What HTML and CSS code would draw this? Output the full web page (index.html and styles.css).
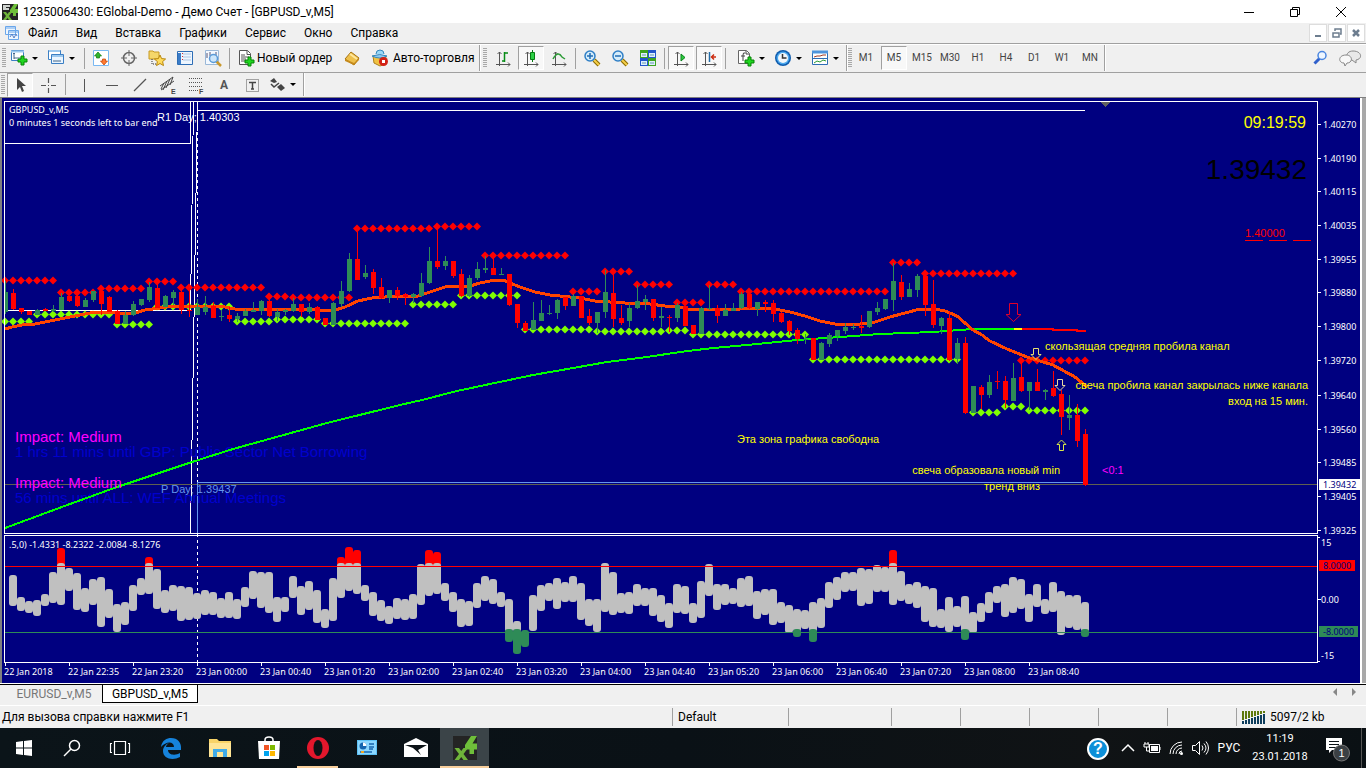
FILE: index.html
```html
<!DOCTYPE html>
<html lang="ru">
<head>
<meta charset="utf-8">
<title>1235006430: EGlobal-Demo - Демо Счет - [GBPUSD_v,M5]</title>
<link rel="stylesheet" href="styles.css">
</head>
<body>
<svg class="defs" aria-hidden="true">
  <defs>
    <g id="axes"><path d="M4.500 1v14M1 13.500h14M2.500 3l2-2 2 2M13 11.500l2 2-2 2" fill="none" stroke="#555"/></g>
    <g id="plus"><path d="M10 7h3v3h3v3h-3v3h-3v-3H7v-3h3z" fill="#1fd51f" stroke="#078307"/></g>
    <g id="lens"><path d="M10 10l5 5" stroke="#8a6a00" stroke-width="4"/><path d="M10 10l5 5" stroke="#f5cf4a" stroke-width="2"/><circle cx="6" cy="6" r="5" fill="#d5ecfa" stroke="#2f7fc6" stroke-width="1.5"/></g>
    <g id="mt"><rect width="16" height="16" fill="#242424"/><path d="M12 0h4l-3 5h3v4h-2v3h-3V9H8V6z" fill="#6fbf3a"/><path d="M1 8h3l1.500 2L7 8h3l-3 4 3 4H7l-1.500-2L4 16H1l3-4z" fill="#6fb53a"/></g>
  </defs>
</svg>
<div class="app">
  <header class="titlebar">
    <svg class="app-icon" viewBox="0 0 16 16"><use href="#mt"/><path d="M1 1h7v2H4v1h3v2H1z" fill="#cfd3cf"/></svg>
    <h1 class="title">1235006430: EGlobal-Demo - Демо Счет - [GBPUSD_v,M5]</h1>
    <button class="win-btn" aria-label="Свернуть"><svg viewBox="0 0 12 12"><path d="M1 6.500h10" stroke="#000"/></svg></button>
    <button class="win-btn" aria-label="Развернуть"><svg viewBox="0 0 12 12"><path d="M1.500 3.500h7v7h-7zM3.500 3.500v-2h7v7h-2" fill="none" stroke="#000"/></svg></button>
    <button class="win-btn" aria-label="Закрыть"><svg viewBox="0 0 12 12"><path d="M1 1l10 10M11 1L1 11" stroke="#000"/></svg></button>
  </header>

  <nav class="menubar">
    <svg class="menu-icon" viewBox="0 0 16 16"><path d="M1.500 1.500h10v8h-10zM4.500 5.500h10v9h-10z" fill="#eef6ff" stroke="#6aa6ea"/><path d="M1.500 3h10M4.500 7h10" stroke="#6aa6ea"/><path d="M6 12l2-3 2 4 2-4 1 2" fill="none" stroke="#5580c8"/></svg>
    <button class="menu">Файл</button><button class="menu">Вид</button><button class="menu">Вставка</button><button class="menu">Графики</button><button class="menu">Сервис</button><button class="menu">Окно</button><button class="menu">Справка</button>
    <span class="spacer"></span>
    <button class="mdi" aria-label="Свернуть окно"><svg viewBox="0 0 12 12"><path d="M3 9h6" stroke="#6d7d8f" stroke-width="2"/></svg></button>
    <button class="mdi" aria-label="Восстановить окно"><svg viewBox="0 0 12 12"><path d="M2 6h6v4H2zM4 4V2h6v5H9" fill="none" stroke="#6d7d8f" stroke-width="1.500"/></svg></button>
    <button class="mdi" aria-label="Закрыть окно"><svg viewBox="0 0 12 12"><path d="M3 3l6 6M9 3L3 9" stroke="#6d7d8f" stroke-width="2.500"/></svg></button>
  </nav>

  <div class="toolbar">
    <i class="grip"></i>
    <button class="tb drop" aria-label="Новый график"><svg viewBox="0 0 18 18"><path d="M1.500 1.500h12v10h-12z" fill="#fff" stroke="#3b7fc4"/><path d="M1 2.500h13" stroke="#9cc8ee" stroke-width="2"/><path d="M4 4v6M3 5l1-1 1 1M4 9h7" fill="none" stroke="#468"/><use href="#plus" x="1" y="0"/></svg></button>
    <button class="tb drop" aria-label="Профили"><svg viewBox="0 0 18 18"><path d="M1.500 1.500h12v9h-12z" fill="#fff" stroke="#3b7fc4"/><path d="M4.500 5.500h12v9h-12z" fill="#eaf5ff" stroke="#3b7fc4"/><path d="M2 2h11M5 7h11" stroke="#9cc8ee" stroke-width="2"/><path d="M6 12h8" stroke="#468"/></svg></button>
    <i class="sep"></i>
    <button class="tb" aria-label="Обзор рынка"><svg viewBox="0 0 18 18"><path d="M1.500 1.500h15v15h-15z" fill="#fff" stroke="#79b8f2"/><path d="M6 3l3.500 4H7.500v2h-3V7h-2z" fill="#2fb52f" stroke="#117a11" stroke-width=".7"/><path d="M12 16l-3.500-4h2v-2h3v2h2z" fill="#ff7a30" stroke="#c03c00" stroke-width=".7"/></svg></button>
    <button class="tb" aria-label="Окно данных"><svg viewBox="0 0 18 18"><circle cx="9" cy="9" r="5.500" fill="none" stroke="#666" stroke-width="1.500"/><path d="M9 1v6M9 11v6M1 9h6M11 9h6" stroke="#666"/></svg></button>
    <button class="tb" aria-label="Навигатор"><svg viewBox="0 0 18 18"><path d="M1 2h4l1 1h5v7H1z" fill="#f5d76a" stroke="#c79a22"/><path d="M4 10v5h5" fill="none" stroke="#333" stroke-dasharray="1 1"/><path d="M12 6l1.600 3.600 4 .4-3 2.600.9 4L12 14.500 8.500 16.600l.9-4-3-2.600 4-.4z" fill="#ffdb5c" stroke="#b8860b"/></svg></button>
    <button class="tb" aria-label="Терминал"><svg viewBox="0 0 18 18"><path d="M1.500 2.500h15v13h-15z" fill="#eef6ff" stroke="#2d6db5"/><path d="M2 4h3v11H2z" fill="#3a7cc8"/><path d="M7 5h8M7 8h8M7 11h8" stroke="#aac6e4"/><path d="M6.500 4v8" stroke="#c33" stroke-dasharray="1 2"/></svg></button>
    <button class="tb" aria-label="Тестер стратегий"><svg viewBox="0 0 18 18"><path d="M1.500 1.500h13v14h-13z" fill="#f4f9ff" stroke="#9ab8d8"/><path d="M3 9V4M6 7V3M12 6V3" stroke="#557"/><path d="M12 12l5 5" stroke="#c9982d" stroke-width="2.500"/><circle cx="9.500" cy="9.500" r="4" fill="#cde6fa" stroke="#5b9bd8" stroke-width="1.500"/></svg></button>
    <i class="sep"></i>
    <button class="tb wide order"><svg viewBox="0 0 18 18"><path d="M2.500 1.500h8l3 3v11h-11z" fill="#fff" stroke="#555"/><path d="M10 1.500v4h4M4 6h4M4 8h8M4 10h5M4 12h4" fill="none" stroke="#555"/><use href="#plus" x="1" y="1"/></svg>Новый ордер</button>
    <button class="tb" aria-label="MetaEditor"><svg viewBox="0 0 18 18"><path d="M2 10l6-7 8 6-5 7z" fill="#eec04c" stroke="#a87412"/><path d="M2 10l9 4 5-5v2l-5 5-9-4z" fill="#c58a1c"/><path d="M7 5l7 5" stroke="#ffe79c" stroke-width="2"/></svg></button>
    <button class="tb wide auto"><svg viewBox="0 0 18 18"><path d="M2 7h13l-1 8-5 2-6-3z" fill="#f0c243" stroke="#ae801a"/><path d="M1 7q8-3 15 0-7 4-15 0" fill="#8cc9ef" stroke="#3587bd"/><path d="M5 5q0-4 4-4t4 4" fill="#9bd7f5" stroke="#3587bd"/><circle cx="12.500" cy="12.500" r="4.500" fill="#d32216"/><path d="M11 11h3v3h-3z" fill="#fff"/></svg>Авто-торговля</button>
    <i class="edge"></i><i class="grip"></i>
    <button class="tb" aria-label="Бары"><svg viewBox="0 0 18 18"><use href="#axes" x="1" y="2"/><path d="M10.500 3v10M8 12h2M11 4h3" stroke="#078b16" stroke-width="1.500"/></svg></button>
    <button class="tb pressed" aria-label="Японские свечи"><svg viewBox="0 0 18 18"><use href="#axes" x="1" y="2"/><path d="M10.500 1v12" stroke="#077b12"/><path d="M8.500 3.500h4v7h-4z" fill="#2bd044" stroke="#077b12"/></svg></button>
    <button class="tb" aria-label="Линия"><svg viewBox="0 0 18 18"><use href="#axes" x="1" y="2"/><path d="M3 10q5-9 9-2l3 2" fill="none" stroke="#2b9b35" stroke-width="1.500"/></svg></button>
    <i class="sep"></i>
    <button class="tb" aria-label="Увеличить"><svg viewBox="0 0 18 18"><use href="#lens" x="1" y="1"/><path d="M4 7h6M7 4v6" stroke="#226eb5" stroke-width="1.500"/></svg></button>
    <button class="tb" aria-label="Уменьшить"><svg viewBox="0 0 18 18"><use href="#lens" x="1" y="1"/><path d="M4 7h6" stroke="#226eb5" stroke-width="1.500"/></svg></button>
    <button class="tb" aria-label="Окна мозаикой"><svg viewBox="0 0 18 18"><path d="M1 1h8v8H1zM9 9h8v8H9z" fill="#3da420"/><path d="M9 1h8v8H9zM1 9h8v8H1z" fill="#2356cc"/><path d="M2 4h6v4H2zM10 4h6v4h-6zM2 12h6v4H2zM10 12h6v4h-6z" fill="#dff0ff"/><path d="M3 6h4M11 6h4M3 14h4M11 14h4" stroke="#69a"/></svg></button>
    <i class="sep"></i>
    <button class="tb pressed" aria-label="Автопрокрутка"><svg viewBox="0 0 18 18"><use href="#axes" x="1" y="2"/><path d="M9 5l4 3.500L9 12z" fill="#2fcb40" stroke="#078118"/></svg></button>
    <button class="tb pressed" aria-label="Сдвиг графика"><svg viewBox="0 0 18 18"><use href="#axes" x="1" y="2"/><path d="M9.500 3v10" stroke="#246da8" stroke-width="1.500"/><path d="M11 8h5M14 5.500L11.500 8l2.500 2.500" fill="none" stroke="#cb2d12" stroke-width="1.500"/></svg></button>
    <i class="sep apart"></i>
    <button class="tb drop" aria-label="Индикаторы"><svg viewBox="0 0 18 18"><path d="M1.500 1.500h8l3 3v10h-11z" fill="#fff" stroke="#666"/><path d="M9 2v3h3M8 4q-2-1-2 2v6M4 7h4" fill="none" stroke="#444"/><use href="#plus" x="1" y="1"/></svg></button>
    <button class="tb drop" aria-label="Периоды"><svg viewBox="0 0 18 18"><circle cx="9" cy="9" r="8" fill="#0e5cae"/><circle cx="9" cy="9" r="6.500" fill="#4ba8ee"/><circle cx="9" cy="9" r="5" fill="#f2f7fb"/><path d="M8.500 5v4h4" fill="none" stroke="#333" stroke-width="1.500"/></svg></button>
    <button class="tb drop" aria-label="Шаблоны"><svg viewBox="0 0 18 18"><path d="M1.500 2.500h15v13h-15zM1.500 9.500h15" fill="#fff" stroke="#2d6db5"/><path d="M1 3h16" stroke="#4e94dc" stroke-width="3"/><path d="M3 8l3-1h3l3-1h3" fill="none" stroke="#a23b24"/><path d="M3 14l3-2 3 1 3-2 3 1" fill="none" stroke="#2b9b35"/></svg></button>
    <i class="edge"></i><i class="grip tight"></i>
    <button class="tb tf">M1</button><button class="tb tf pressed">M5</button><button class="tb tf">M15</button><button class="tb tf">M30</button><button class="tb tf">H1</button><button class="tb tf">H4</button><button class="tb tf">D1</button><button class="tb tf">W1</button><button class="tb tf">MN</button>
    <i class="edge"></i>
    <span class="spacer"></span>
    <button class="tb" aria-label="Поиск"><svg viewBox="0 0 18 18"><path d="M9 9l-5.500 5.500" stroke="#2f60cc" stroke-width="3"/><circle cx="11" cy="6.500" r="4" fill="#eef6ff" stroke="#4a86e0" stroke-width="1.500"/></svg></button>
    <button class="tb chat" aria-label="Чат"><svg viewBox="0 0 24 18"><path d="M15 2c-8 0-8 9-1 9l4 3v-3c7-1 6-9-3-9z" fill="#e8e8e8" stroke="#888"/><path d="M8 6c-8 0-8 8-2 8l1 3 2-3c6 0 6-8-1-8z" fill="#f8f8f8" stroke="#888"/></svg></button>
  </div>

  <div class="toolbar draw">
    <i class="grip"></i>
    <button class="tb pressed" aria-label="Курсор"><svg viewBox="0 0 18 18"><path d="M6 2v12l3-3 2 5 2-1-2-5h4z" fill="#444"/></svg></button>
    <button class="tb" aria-label="Перекрестие"><svg viewBox="0 0 18 18"><path d="M9.500 2v5M9.500 12v5M2 9.500h5M12 9.500h5M9 9.500h1" stroke="#555" stroke-width="1.200"/></svg></button>
    <i class="sep"></i>
    <button class="tb" aria-label="Вертикальная линия"><svg viewBox="0 0 18 18"><path d="M9.500 3v13" stroke="#555"/></svg></button>
    <button class="tb" aria-label="Горизонтальная линия"><svg viewBox="0 0 18 18"><path d="M3 9.500h12" stroke="#555"/></svg></button>
    <button class="tb" aria-label="Трендовая линия"><svg viewBox="0 0 18 18"><path d="M3 15L15 3" stroke="#555" stroke-width="1.200"/></svg></button>
    <button class="tb" aria-label="Равноудаленный канал"><svg viewBox="0 0 18 18"><path d="M1 10L14 1M2 14L15 5M4 14l4-9M7 12l4-9M11 9l3-8M2 13l3-6" stroke="#444"/><text x="12" y="18" class="glyph">E</text></svg></button>
    <button class="tb" aria-label="Линии Фибоначчи"><svg viewBox="0 0 18 18"><path d="M2 2.500h14M2 6.500h14M2 10.500h14M2 14.500h9" stroke="#555" stroke-dasharray="1 1"/><text x="12" y="18" class="glyph">F</text></svg></button>
    <button class="tb letter">A</button>
    <button class="tb" aria-label="Текстовая метка"><svg viewBox="0 0 18 18"><path d="M3.500 3.500h12v12h-12z" fill="none" stroke="#555" stroke-dasharray="1 1"/><path d="M6 6.500h7M9.500 6v7M8 13h3" stroke="#444" stroke-width="1.500"/></svg></button>
    <button class="tb drop" aria-label="Стрелки"><svg viewBox="0 0 18 18"><path d="M2 5l4-3 3 4-3 1zM9 11l4-3 4 4-4 3z" fill="#444"/><path d="M3 8l3 3 5-4" fill="none" stroke="#444" stroke-width="1.500"/></svg></button>
    <i class="edge"></i>
  </div>

  <main class="workspace">
    <svg id="chart" class="chart" viewBox="2 99 1358 584" role="img" aria-label="GBPUSD_v,M5"></svg>
  </main>

  <div class="tabs">
    <button class="tab">EURUSD_v,M5</button><button class="tab active">GBPUSD_v,M5</button>
    <span class="spacer"></span>
    <button class="scroll" aria-label="Влево"><svg viewBox="0 0 6 8"><path d="M5 0v8L1 4z" fill="#888"/></svg></button>
    <button class="scroll" aria-label="Вправо"><svg viewBox="0 0 6 8"><path d="M1 0v8l4-4z" fill="#888"/></svg></button>
  </div>

  <footer class="status">
    <span class="hint">Для вызова справки нажмите F1</span><span class="cell">Default</span><span class="cell"></span><span class="cell"></span><span class="cell"></span><span class="cell"></span><span class="cell"></span><span class="cell"></span>
    <span class="cell"><svg class="net" viewBox="0 0 24 13"><path d="M1 0v9M4 0v8M7 0v7M10 0v6M13 0v5M16 0v4M19 0v3M22 0v2" stroke="#5f7a0c" stroke-width="2"/><path d="M1 13v-3M4 13V9M7 13V8M10 13V7M13 13V6M16 13V5M19 13V4M22 13V3" stroke="#0d3d5c" stroke-width="2"/></svg>5097/2 kb</span>
  </footer>

  <div class="taskbar">
    <button class="task small" aria-label="Пуск"><svg viewBox="0 0 24 24"><path d="M4 6l7-1v6.500H4zM12 5l8-1v7.500h-8zM4 12.500h7V19l-7-1zM12 12.500h8V20l-8-1z" fill="#fff"/></svg></button>
    <button class="task small" aria-label="Поиск"><svg viewBox="0 0 24 24"><circle cx="14.500" cy="9.500" r="5" fill="none" stroke="#fff" stroke-width="1.500"/><path d="M11 13l-7 7" stroke="#fff" stroke-width="1.500"/></svg></button>
    <button class="task small" aria-label="Представление задач"><svg viewBox="0 0 24 24"><path d="M6.500 5.500h11v13h-11zM4 7.500H2.500v9H4M20 7.500h1.500v9H20" fill="none" stroke="#fff" stroke-width="1.200"/></svg></button>
    <button class="task edge-app" aria-label="Edge"><svg viewBox="0 0 24 24"><path d="M2 11C3 4 8 2 12 2c7 0 10 5 10 9v3H9c0 5 7 6 12 3v4c-7 4-17 2-17-6 0-4 3-7 6-8-2 1-3 3-3 4h8c0-6-8-6-13 0z" fill="#1683dc"/></svg></button>
    <button class="task" aria-label="Проводник"><svg viewBox="0 0 24 24"><path d="M1 3h8l2 2h12v16H1z" fill="#f8d367"/><path d="M1 7h22v14H1z" fill="#ffe595"/><path d="M5 13h14v8h-4v-5H9v5H5z" fill="#40abe8"/></svg></button>
    <button class="task" aria-label="Магазин"><svg viewBox="0 0 24 24"><path d="M8 6V4q0-3 4-3t4 3v2" fill="none" stroke="#fff" stroke-width="1.500"/><path d="M1 5h22l-1 18H2z" fill="#fff"/><path d="M7 9h5v5H7z" fill="#f15424"/><path d="M13 9h5v5h-5z" fill="#7eb900"/><path d="M7 15h5v5H7z" fill="#00a3ee"/><path d="M13 15h5v5h-5z" fill="#ffb800"/></svg></button>
    <button class="task running" aria-label="Opera"><svg viewBox="0 0 24 24"><ellipse cx="12" cy="12" rx="11" ry="11" fill="#e3172c"/><ellipse cx="12" cy="12" rx="4.500" ry="8" fill="#0c1317"/></svg></button>
    <button class="task" aria-label="Панель управления"><svg viewBox="0 0 24 24"><path d="M2 4h20v15H2z" fill="#5dc1f5"/><path d="M3 5h18v13H3z" fill="#8ad6ff"/><circle cx="8" cy="10" r="3.500" fill="#1765af"/><path d="M8 10V6.500A3.500 3.500 0 0 1 11.500 10z" fill="#fff"/><path d="M14 8h5M14 11h5M14 13h4M5 16h12" stroke="#1765af" stroke-width="1.500"/><path d="M6 16h3" stroke="#f2a723" stroke-width="2"/></svg></button>
    <button class="task" aria-label="Почта"><svg viewBox="0 0 24 24"><path d="M0 8l12-6 12 6v13H0z" fill="#fff"/><path d="M1 9l22 0-9 5 3 5-8-7z" fill="#0c1317"/></svg></button>
    <button class="task active" aria-label="MetaTrader"><svg viewBox="0 0 16 16"><use href="#mt"/></svg></button>
    <span class="spacer"></span>
    <button class="tray help" aria-label="Справка">?</button>
    <button class="tray" aria-label="Скрытые значки"><svg viewBox="0 0 18 18"><path d="M3 12l6-6 6 6" fill="none" stroke="#fff" stroke-width="1.500"/></svg></button>
    <button class="tray" aria-label="Батарея"><svg viewBox="0 0 18 18"><path d="M6.500 5.500h10v8h-10z" fill="none" stroke="#fff"/><path d="M8 7h7v5H8z" fill="#fff"/><path d="M17 8v3M2 3v2M5 3v2M1 5h5v3H1zM3.500 8v4H7" stroke="#fff" fill="none"/></svg></button>
    <button class="tray" aria-label="Сеть"><svg viewBox="0 0 18 18"><path d="M3 15A12 12 0 0 1 15 3M6 15a9 9 0 0 1 9-9M9 15a6 6 0 0 1 6-6M12 15a3 3 0 0 1 3-3" fill="none" stroke="#fff"/><circle cx="14.500" cy="14.500" r="1.500" fill="#fff"/></svg></button>
    <button class="tray" aria-label="Звук"><svg viewBox="0 0 18 18"><path d="M1.500 6.500h3l4-4v13l-4-4h-3z" fill="none" stroke="#fff"/><path d="M11 6.500q2 2.500 0 5M13 4.500q4 4.500 0 9M15 2.500q5 6.500 0 13" fill="none" stroke="#fff"/></svg></button>
    <button class="tray lang">РУС</button>
    <button class="tray clock"><span>11:19</span><span>23.01.2018</span></button>
    <button class="tray notify" aria-label="Уведомления, 1"><svg viewBox="0 0 28 28"><path d="M2 4h16v12H8l-3 3v-3H2z" fill="#fff"/><path d="M5 7.500h10M5 10.500h10M5 13.500h7" stroke="#0c1317"/><circle cx="17.500" cy="19" r="8" fill="#3b4044" stroke="#777"/><text x="17.500" y="23" class="count">1</text></svg></button>
  </div>
</div>
<script src="chart.js"></script>
</body>
</html>
```
FILE: styles.css
```css
* { box-sizing: border-box; }
body { margin: 0; background: #f0f0f0; font: 12px/16px Roboto, "Open Sans", sans-serif; color: #000; }
button { border: 0; padding: 0; background: none; font: inherit; color: inherit; }
svg { display: block; flex: none; }
.defs { width: 0; height: 0; position: absolute; }
.app { min-height: 100vh; display: flex; flex-direction: column; }
.spacer { flex: 1; }

.titlebar { height: 23px; display: flex; align-items: center; background: #fff; padding-left: 2px; }
.app-icon { width: 16px; height: 16px; }
.title { flex: 1; margin: 0 0 0 5px; font: inherit; }
.win-btn { width: 46px; height: 22px; display: grid; place-items: center; }
.win-btn:last-child { margin-right: 2px; }
.win-btn svg { width: 12px; height: 12px; }

.menubar { height: 21px; display: flex; align-items: center; padding: 0 1px 0 4px; border-bottom: 1px solid #a0a0a0; }
.menu-icon { width: 16px; height: 16px; margin-right: 8px; }
.menu { margin-right: 18px; }
.mdi { width: 18px; height: 18px; margin-left: 1px; display: grid; place-items: center; background: #fff; border: 1px solid #ddd; }
.mdi svg { width: 12px; height: 12px; }

.toolbar { height: 28px; display: flex; align-items: center; border-top: 1px solid #fff; padding-bottom: 1px; }
.grip { width: 4px; height: 20px; margin: 0 2px; background: repeating-linear-gradient(#a8a8a8 0 1px, #f0f0f0 1px 2px); }
.grip.tight { margin: 0; }
.tb { width: 28px; height: 24px; display: flex; align-items: center; justify-content: center; border: 1px solid transparent; flex: none; }
.tb svg { width: 18px; height: 18px; }
.tb.pressed { background: #f8f8f8; border-color: #a0a0a0 #fff #fff #a0a0a0; margin: 0 1px; width: 26px; }
.tb.drop { width: 37px; justify-content: flex-start; padding-left: 1px; }
.tb.drop::after { content: ""; border: 3px solid transparent; border-top-color: #000; border-bottom: 0; margin-left: 4px; }
.tb.wide { justify-content: flex-start; padding-left: 4px; white-space: nowrap; }
.tb.order { width: 106px; gap: 2px; }
.tb.auto { width: 113px; gap: 4px; }
.tb.chat { width: 32px; }
.tb.chat svg { width: 24px; }
.tf { font-size: 10px; color: #444; }
.letter { font-size: 12px; font-weight: 700; color: #555; }
.glyph { font: bold 7px "Liberation Sans", sans-serif; fill: #444; }
.sep { width: 2px; height: 21px; margin: 0 1px 0 2px; border-left: 1px solid #a0a0a0; }
.sep.apart { margin-right: 8px; }
.edge { width: 2px; height: 100%; border-left: 1px solid #a0a0a0; border-right: 1px solid #fff; }
.draw { height: 25px; border-top-color: #a0a0a0; }
.draw .grip { margin: 0 1px; }
.draw .sep { margin: 0 3px; }

.workspace { flex: 1; padding: 1px 6px 1px 2px; background: linear-gradient(90deg, #808080 0 2px, #000080 2px calc(100% - 6px), #fff calc(100% - 6px) calc(100% - 4px), #a8a8a8 calc(100% - 4px)); border-top: 1px solid #808080; }
.chart { width: 100%; height: auto; background: #000080; shape-rendering: crispEdges; }
.chart text { fill: #fff; }
.chart .axis { font: 9px "Noto Sans", sans-serif; }
.chart .note { font: 11px "Liberation Sans", sans-serif; }
.chart .news { font: 15px "Liberation Sans", sans-serif; }
.chart .time { font: 16px "Liberation Sans", sans-serif; }
.chart .price { font: 28px "Liberation Sans", sans-serif; }
.chart .end { text-anchor: end; }
.chart .yellow { fill: #ff0; }
.chart .magenta { fill: #f0f; }
.chart .red { fill: #f00; }
.chart .blue { fill: #0000cd; }
.chart .sky { fill: #6495ed; }
.chart .black { fill: #000; }
.chart .navy { fill: #000080; }

.tabs { height: 22px; display: flex; align-items: flex-start; border-top: 1px solid #000; box-shadow: 0 -1px #fff; padding: 0 3px 0 2px; border-bottom: 1px solid #fff; }
.tab { width: 100px; height: 18px; color: #777; padding-left: 4px; }
.tab.active { width: 96px; padding: 0; background: #fff; color: #000; border: 1px solid #000; border-top: 0; }
.scroll { width: 19px; height: 14px; display: grid; place-items: center; }
.scroll svg { width: 6px; height: 8px; }

.status { height: 22px; display: flex; align-items: center; }
.hint { flex: 1; padding-left: 2px; }
.cell { height: 18px; width: 69px; padding-left: 5px; border-left: 1px solid #a0a0a0; display: flex; align-items: center; gap: 4px; }
.hint + .cell { width: 116px; }
.hint + .cell + .cell { width: 103px; }
.cell:last-child { width: 130px; }
.net { width: 24px; height: 13px; }

.taskbar { height: 40px; display: flex; align-items: stretch; background: linear-gradient(90deg, #0b1419, #0a1116 50%, #101315 80%, #0a1014); color: #fff; padding-right: 4px; }
.task { width: 49px; display: grid; place-items: center; }
.task.small { width: 48px; }
.task.edge-app { margin-left: 2px; }
.task svg { width: 24px; height: 24px; }
.task.running { border-bottom: 2px solid #f8cf9c; border-top: 2px solid transparent; width: 41px; margin: 0 4px; }
.task.active { background: #3b4448; border-bottom: 2px solid #f8cf9c; border-top: 2px solid #3b4448; }
.tray { width: 24px; display: grid; place-items: center; }
.tray svg { width: 18px; height: 18px; }
.tray.help { width: 22px; height: 22px; margin: 10px 7px 0 0; border-radius: 50%; background: #0c8fd8; border: 2px solid #fff; font: bold 16px/18px "Liberation Sans", sans-serif; display: block; }
.tray.lang { width: 34px; }
.tray.clock { width: 68px; font-size: 11px; line-height: 18px; align-content: center; }
.tray.notify { width: 48px; border-right: 1px solid #555; }
.tray.notify svg { width: 28px; height: 28px; }
.count { font: 11px "Liberation Sans", sans-serif; fill: #fff; text-anchor: middle; }
```
FILE: chart.js
```js
const NS = "http://www.w3.org/2000/svg";
const chart = document.getElementById("chart");
const add = (tag, attrs, text) => {
  const el = document.createElementNS(NS, tag);
  for (const k in attrs) el.setAttribute(k, attrs[k]);
  if (text) el.textContent = text;
  chart.appendChild(el);
};
const path = (d, stroke, width = 1, fill = "none", extra = {}) => add("path", { d, stroke, "stroke-width": width, fill, ...extra });
const label = (x, y, text, cls) => add("text", { x, y, class: cls }, text);
const barX = i => 5 + 8 * i;

// Period separator and pivot levels
path("M5 310.5H190", "#fff");
path("M193.5 102L190.5 310M197.5 102L190.5 533M197 110.500H1085", "#fff");
path("M197.500 102V662", "#fff", 1, "none", { "stroke-dasharray": "3 3" });
path("M5 484.500H1317", "#606050");
path("M1085 482.500H197V533", "#6495ed");

label(15, 457, "1 hrs 11 mins until GBP: Public Sector Net Borrowing", "news blue");
label(15, 503, "56 mins until ALL: WEF Annual Meetings", "news blue");

// Channel dots: [first bar, last bar, y]
const upper = [[0,6,280],[7,11,292],[12,17,288],[18,21,281],[22,32,287],[33,35,296],[36,43,297],[44,53,228],[54,59,226],[60,70,255],[71,74,291],[75,78,271],[79,83,284],[84,87,302],[88,91,284],[92,110,291],[111,114,262],[115,126,273],[127,135,360]];
const lower = [[0,3,321],[4,13,314],[14,18,324],[19,28,306],[29,33,321],[34,39,319],[40,50,323],[51,56,304],[57,64,295],[65,73,329],[74,82,331],[83,85,330],[86,100,334],[101,119,359],[121,124,412],[125,127,406],[128,135,410]];
const dots = (runs, color) => {
  let d = "";
  for (const [a, b, y] of runs) for (let i = a; i <= b; i++) d += `M${barX(i) - 4} ${y + .5}l4-4 4 4-4 4z`;
  path(d, "none", 0, color, { "shape-rendering": "auto" });
};
dots(upper, "#ff0000");
dots(lower, "#7fff00");

// Moving averages
path("M5 528L70 504L117 487L147 477L192 462L233 449L280 436L327 423L400 405L422 400L457 391L490 384L533 375L573 368L607 362L647 357L680 352L713 348L747 345L797 340L840 337L880 334L933 332L973 329L1014 329", "#00ff00", 2);
path("M1014 329H1022", "#ffff00", 2);
path("M1022 329H1053V330H1077V331H1086", "#ff0000", 2);
path("M5 329L12 327L22 325L35 324L45 322L55 320L70 317L85 314L95 312L105 312L118 313L135 313L145 310L160 308L172 306L210 306L225 307L235 309L315 309L325 311L335 310L345 307L358 301L372 298L385 297L418 296L430 292L445 287L455 286L470 286L480 283L490 281L503 280L510 283L520 287L535 292L550 295L570 297L580 298L595 301L610 302L625 303L650 304L665 306L680 307L692 310L706 309L725 310L740 309L755 308L775 309L790 312L805 316L820 321L835 324L860 324L872 323L890 317L905 313L920 309L935 309L945 311L957 316L973 330L982 335L990 341L1007 349L1027 357L1053 365L1075 377L1087 387", "#ff4500", 3);

// Candles: direction, high, body top, body bottom, low
const candles = `G281,292,312,314 R289,293,309,310 R308,308,312,314 R311,311,315,315 G309,310,315,315 R308,309,311,311 G305,309,311,312 G293,297,310,310 R296,296,301,302 R294,296,306,307
G298,300,307,307 G291,291,300,302 R290,291,304,315 R296,297,312,312 R310,311,324,324 G311,315,324,324 G301,304,315,316 G299,299,305,306 G282,287,300,302 R283,288,308,308
G295,296,307,307 G290,292,298,305 R288,292,310,314 R287,310,311,317 G299,307,315,315 G296,307,312,315 R302,306,318,318 G310,316,317,321 R307,315,319,322 G313,316,319,322
G309,311,316,316 G302,310,312,312 G300,301,311,315 R298,301,316,317 G309,312,317,321 G309,310,312,315 G298,304,311,312 R304,304,312,317 G303,307,312,314 R306,307,320,320
R318,318,325,325 G302,303,325,325 G281,291,304,307 G253,259,291,292 R230,259,280,280 G265,273,277,279 R269,272,288,294 R278,287,298,299 G290,290,298,303 R287,290,296,300
R293,294,297,305 G293,294,297,303 G273,283,296,297 G247,261,283,284 R228,261,267,269 G256,261,266,270 R261,261,276,278 R269,274,296,297 G275,278,296,297 G262,269,278,280
G256,268,270,273 R256,268,275,275 G268,274,275,275 R274,274,305,306 R304,304,323,328 R321,323,331,331 G302,320,330,330 G300,313,321,321 G305,313,314,315 G299,300,313,319
R297,297,306,310 G294,296,306,306 R296,296,318,318 R309,316,323,325 G312,312,323,333 G270,292,312,318 R272,293,319,327 R305,318,323,325 G303,308,321,327 G285,301,308,309
G295,299,302,310 R299,299,318,321 G307,316,318,327 R315,317,318,332 G303,305,318,322 R306,306,326,326 R325,325,334,334 G307,308,334,334 G285,308,309,310 R305,308,316,323
G304,310,316,316 G303,308,311,311 G292,294,308,309 R292,294,308,309 G302,302,309,316 R300,302,304,312 R300,303,314,322 R312,313,322,323 R320,321,331,335 R328,330,339,344
G334,339,340,344 R338,338,360,360 G342,343,360,360 G333,335,344,347 G330,330,336,341 G323,327,331,334 G324,327,328,330 R315,326,328,333 G311,311,327,328 G302,308,312,315
G299,299,309,310 G263,281,300,311 R275,282,297,300 G283,289,297,297 G274,276,290,297 R274,276,305,316 R280,304,325,328 G317,318,326,334 R311,318,360,361 G338,343,359,364
R337,343,413,414 G386,386,413,413 R385,387,395,409 G375,382,395,398 R371,381,382,389 R376,381,400,408 G363,378,401,401 R361,377,391,392 G382,382,391,410 R369,382,391,391
G389,390,392,400 R371,388,396,397 R390,394,417,435 G395,415,418,430 R404,415,441,447 R429,434,485,486`.split(/\s+/);
const bodies = { G: "", R: "" };
candles.forEach((c, i) => {
  const [hi, top, bottom, lo] = c.slice(1).split(",").map(Number);
  const x = barX(i), left = Math.max(x - 2, 5);
  bodies[c[0]] += `M${x} ${hi}h1V${lo}h-1zM${left} ${top}H${x + 3}V${bottom}H${left}z`;
});
path(bodies.G, "none", 0, "#2e8b57", { "fill-rule": "nonzero" });
path(bodies.R, "none", 0, "#ff0000", { "fill-rule": "nonzero" });

// Oscillator: top-bottom of each bar, starting with bar 1
const osc = `575-606 597-611 601-613 600-616 594-606 572-603 563-605 568-591 573-610 588-612 579-605 577-627 589-618 604-632 602-625 585-611 578-595 563-594 569-609
590-613 585-611 586-621 587-620 593-619 590-615 592-615 598-618 592-618 599-619 587-607 571-599 572-608 572-613 597-622 597-612 576-598 586-615 581-610 590-623
609-628 578-621 563-598 563-591 563-594 585-601 592-616 600-621 606-624 598-619 599-620 594-619 564-605 563-596 563-594 583-601 592-612 599-627 601-626 583-608
576-601 579-604 592-607 599-632 621-632 632-632 595-631 585-611 583-601 578-609 582-602 576-602 583-620 599-626 599-632 563-612 572-615 593-613 592-614 584-606
588-606 588-616 595-622 603-628 584-613 586-614 603-623 581-618 564-596 584-610 584-605 588-604 578-607 576-606 591-619 589-615 589-625 602-623 605-633 609-632
610-629 602-632 598-628 582-608 577-600 572-592 572-591 568-606 569-604 565-592 567-592 563-605 571-601 584-604 582-608 586-622 588-627 609-628 597-632 606-627
596-632 612-633 603-622 592-613 586-603 584-617 577-613 579-609 594-622 584-607 599-614 582-612 591-635 595-628 595-630 602-632`.split(/\s+/);
const peaks = [[7,548],[18,557],[42,557],[43,547],[44,550],[53,550],[54,552],[111,550]];
const troughs = [[63,629,642],[64,629,654],[65,630,647],[99,629,637],[101,629,642],[120,629,640],[135,629,637]];
const bar = (i, top, bottom, fill) => add("rect", { x: barX(i) - 4, y: top, width: 8, height: bottom - top, rx: 3, fill, "shape-rendering": "auto" });
peaks.forEach(([i, top]) => bar(i, top, 575, "#ff0000"));
osc.forEach((o, k) => { const [t, b] = o.split("-").map(Number); if (b > t) bar(k + 1, t, b, "#c0c0c0"); });
troughs.forEach(([i, t, b]) => bar(i, t, b, "#2e8b57"));
path("M5 566.500H1317", "#ff0000");
path("M5 632.500H1317", "#2e8b57");

// Frames and axes
path("M4.500 101.500H1317.500V533.500H4.500zM4.500 535.500H1317.500V662.500H4.500zM5 143.500H190.500V102", "#fff");
path("M1101 102h9l-4.500 5z", "none", 0, "#606060");
const prices = [[124,"1.40270"],[158,"1.40190"],[191,"1.40115"],[225,"1.40035"],[259,"1.39955"],[292,"1.39880"],[326,"1.39800"],[360,"1.39720"],[395,"1.39640"],[429,"1.39560"],[462,"1.39485"],[496,"1.39405"],[530,"1.39325"]];
prices.forEach(([y, t]) => { path(`M1318 ${y}.5h3`, "#fff"); label(1323, y + 4, t, "axis"); });
add("rect", { x: 1319, y: 479, width: 41, height: 11, fill: "#fff" });
label(1323, 488, "1.39432", "axis navy");
add("rect", { x: 1319, y: 560, width: 36, height: 11, fill: "#ff0000" });
label(1323, 569, "8.0000", "axis navy");
add("rect", { x: 1319, y: 626, width: 39, height: 11, fill: "#2e8b57" });
label(1323, 635, "-8.0000", "axis navy");
label(1321, 546, "15", "axis");
label(1321, 603, "0.00", "axis");
label(1321, 659, "-15", "axis");
path("M1318 599.500h3M1318 537.500h2M1318 661.500h2", "#fff");
["22 Jan 2018","22 Jan 22:35","22 Jan 23:20","23 Jan 00:00","23 Jan 00:40","23 Jan 01:20","23 Jan 02:00","23 Jan 02:40","23 Jan 03:20","23 Jan 04:00","23 Jan 04:40","23 Jan 05:20","23 Jan 06:00","23 Jan 06:40","23 Jan 07:20","23 Jan 08:00","23 Jan 08:40"].forEach((t, k) => {
  path(`M${5.5 + 64 * k} 663v3`, "#fff");
  label(4 + 64 * k, 675, t, "axis");
});

// Text and arrows placed on the chart
label(9, 113, "GBPUSD_v,M5", "axis");
label(9, 126, "0 minutes 1 seconds left to bar end", "axis");
label(9, 548, ".5,0) -1.4331 -8.2322 -2.0084 -8.1276", "axis");
label(157, 121, "R1 Day; 1.40303", "note");
label(161, 493, "P Day; 1.39437", "note sky");
label(15, 442, "Impact: Medium", "news magenta");
label(15, 488, "Impact: Medium", "news magenta");
label(1306, 128, "09:19:59", "time yellow end");
label(1307, 179, "1.39432", "price black end");
label(1245, 237, "1.40000", "note red");
path("M1245 240.500h18M1269 240.500h18M1293 240.500h18", "#ff0000");
label(1045, 350, "скользящая средняя пробила канал", "note yellow");
label(1308, 389, "свеча пробила канал закрылась ниже канала", "note yellow end");
label(1308, 405, "вход на 15 мин.", "note yellow end");
label(737, 443, "Эта зона графика свободна", "note yellow");
label(1060, 474, "свеча образовала новый min", "note yellow end");
label(1040, 490, "тренд вниз", "note yellow end");
label(1102, 474, "<0:1", "note magenta");
const soft = { "shape-rendering": "auto" };
path("M1009.500 303.500h8v11h3.500l-7.500 7-7.500-7h3.500z", "#e00028", 1, "none", soft);
path("M1033.500 348.500h5v6h2.500l-5 5-5-5h2.500z", "#e8e070", 1, "none", soft);
path("M1057.500 379.500h5v6h2.500l-5 5-5-5h2.500z", "#e8d8a0", 1, "none", soft);
path("M1059.500 450.500h4v-6h2.500l-4.500-4.500-4.500 4.500h2.500z", "#d8e848", 1, "none", soft);
```
